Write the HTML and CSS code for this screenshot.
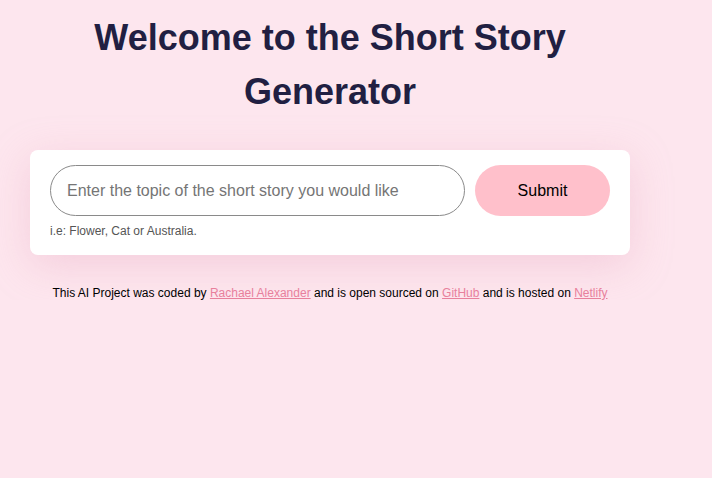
FILE: index.html
```html
<!DOCTYPE html>
<html lang="en">
<head>
<meta charset="utf-8">
<title>Short Story Generator</title>
<link rel="stylesheet" href="styles.css">
</head>
<body>
<div class="container">
  <h1 class="title">Welcome to the Short Story Generator</h1>
  <form class="card">
    <div class="row">
      <input class="topic" type="text" placeholder="Enter the topic of the short story you would like">
      <button class="submit" type="button">Submit</button>
    </div>
    <div class="hint">i.e: Flower, Cat or Australia.</div>
  </form>
  <footer class="footer">This AI Project was coded by <a href="#">Rachael Alexander</a> and is open sourced on <a href="#">GitHub</a> and is hosted on <a href="#">Netlify</a></footer>
</div>
</body>
</html>
```
FILE: styles.css
```css
html, body {
  margin: 0;
  padding: 0;
  background: #fde6ee;
  font-family: Arial, "Liberation Sans", sans-serif;
}
.container {
  width: 600px;
  margin-left: 30px;
  padding-top: 11px;
}
.title {
  margin: 0 0 31px;
  font-size: 36px;
  line-height: 54px;
  font-weight: bold;
  color: #211f42;
  text-align: center;
  padding: 0 40px;
}
.card {
  background: #ffffff;
  border-radius: 8px;
  padding: 15px 20px 17px;
  box-shadow: 0 10px 40px rgba(230, 160, 185, 0.35);
  margin: 0;
}
.row {
  display: flex;
  gap: 10px;
}
.topic {
  flex: 1;
  height: 51px;
  box-sizing: border-box;
  border: 1px solid #8a8a8a;
  border-radius: 26px;
  padding: 0 16px;
  font-family: inherit;
  font-size: 16px;
  outline: none;
}
.topic::placeholder {
  color: #757575;
}
.submit {
  width: 135px;
  height: 51px;
  border: none;
  border-radius: 26px;
  background: #ffc0cb;
  color: #000;
  font-family: inherit;
  font-size: 16px;
}
.hint {
  margin-top: 8px;
  font-size: 12px;
  line-height: 14px;
  color: #555555;
}
.footer {
  margin-top: 31px;
  text-align: center;
  font-size: 12px;
  line-height: 14px;
  color: #000;
}
.footer a {
  color: #e8809c;
}
```
